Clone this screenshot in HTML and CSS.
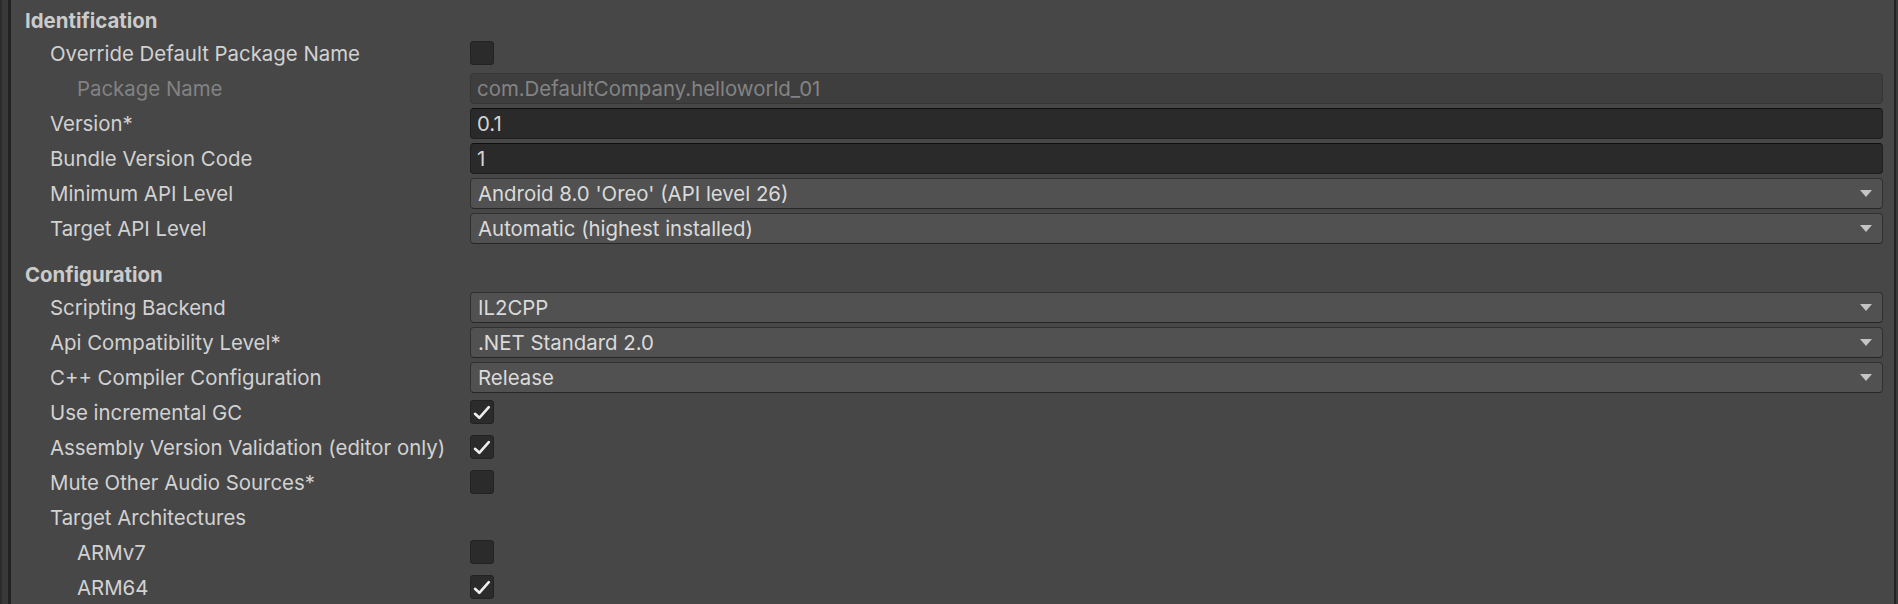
FILE: index.html
```html
<!DOCTYPE html>
<html>
<head>
<meta charset="utf-8">
<link rel="stylesheet" href="styles.css">
</head>
<body>
<div class="window">
  <div class="chrome-left"><span class="cl-a"></span><span class="cl-b"></span><span class="cl-c"></span></div>
  <div class="content">
    <section class="section first">
      <div class="header">Identification</div>
      <div class="row">
        <div class="label">Override Default Package Name</div>
        <div class="value"><span class="checkbox"></span></div>
      </div>
      <div class="row">
        <div class="label sub disabled">Package Name</div>
        <div class="value"><div class="field disabled-field">com.DefaultCompany.helloworld_01</div></div>
      </div>
      <div class="row">
        <div class="label">Version*</div>
        <div class="value"><div class="field text-field">0.1</div></div>
      </div>
      <div class="row">
        <div class="label">Bundle Version Code</div>
        <div class="value"><div class="field text-field">1</div></div>
      </div>
      <div class="row">
        <div class="label">Minimum API Level</div>
        <div class="value"><div class="field dropdown"><span>Android 8.0 'Oreo' (API level 26)</span><svg class="arrow" width="12" height="7" viewBox="0 0 12 7"><path d="M0 0H12L6 7Z"/></svg></div></div>
      </div>
      <div class="row">
        <div class="label">Target API Level</div>
        <div class="value"><div class="field dropdown"><span>Automatic (highest installed)</span><svg class="arrow" width="12" height="7" viewBox="0 0 12 7"><path d="M0 0H12L6 7Z"/></svg></div></div>
      </div>
    </section>
    <section class="section">
      <div class="header">Configuration</div>
      <div class="row">
        <div class="label">Scripting Backend</div>
        <div class="value"><div class="field dropdown"><span>IL2CPP</span><svg class="arrow" width="12" height="7" viewBox="0 0 12 7"><path d="M0 0H12L6 7Z"/></svg></div></div>
      </div>
      <div class="row">
        <div class="label">Api Compatibility Level*</div>
        <div class="value"><div class="field dropdown"><span>.NET Standard 2.0</span><svg class="arrow" width="12" height="7" viewBox="0 0 12 7"><path d="M0 0H12L6 7Z"/></svg></div></div>
      </div>
      <div class="row">
        <div class="label">C++ Compiler Configuration</div>
        <div class="value"><div class="field dropdown"><span>Release</span><svg class="arrow" width="12" height="7" viewBox="0 0 12 7"><path d="M0 0H12L6 7Z"/></svg></div></div>
      </div>
      <div class="row">
        <div class="label">Use incremental GC</div>
        <div class="value"><span class="checkbox"><svg width="24" height="24" viewBox="0 0 24 24"><path d="M5 13.8L9.3 17.8L18.8 7.2"/></svg></span></div>
      </div>
      <div class="row">
        <div class="label">Assembly Version Validation (editor only)</div>
        <div class="value"><span class="checkbox"><svg width="24" height="24" viewBox="0 0 24 24"><path d="M5 13.8L9.3 17.8L18.8 7.2"/></svg></span></div>
      </div>
      <div class="row">
        <div class="label">Mute Other Audio Sources*</div>
        <div class="value"><span class="checkbox"></span></div>
      </div>
      <div class="row">
        <div class="label">Target Architectures</div>
        <div class="value"></div>
      </div>
      <div class="row">
        <div class="label sub">ARMv7</div>
        <div class="value"><span class="checkbox"></span></div>
      </div>
      <div class="row">
        <div class="label sub">ARM64</div>
        <div class="value"><span class="checkbox"><svg width="24" height="24" viewBox="0 0 24 24"><path d="M5 13.8L9.3 17.8L18.8 7.2"/></svg></span></div>
      </div>
    </section>
  </div>
  <div class="chrome-right"><span class="cr-a"></span><span class="cr-b"></span></div>
</div>
</body>
</html>
```
FILE: styles.css
```css
html, body {
  margin: 0;
  padding: 0;
  background: #474747;
  height: 100%;
  overflow: hidden;
}
body {
  font-family: Inter, "Noto Sans", sans-serif;
  font-size: 20.4px;
  color: #d2d2d2;
}
.window {
  display: flex;
  height: 604px;
  width: 1898px;
}
.chrome-left, .chrome-right {
  display: flex;
  flex: none;
}
.chrome-left span, .chrome-right span { display: block; height: 100%; }
.cl-a { width: 2px; background: #2c2c2c; }
.cl-b { width: 6px; background: #393939; }
.cl-c { width: 3px; background: #222222; }
.cr-a { width: 2px; background: #232323; }
.cr-b { width: 2px; background: #3a3a3a; }
.content {
  flex: 1;
  padding: 6px 11px 0 0;
  background: #474747;
}
.section + .section { margin-top: 14px; }
.header {
  height: 30px;
  line-height: 30px;
  padding-left: 14px;
  font-weight: 700;
  color: #cbcbcb;
}
.row {
  height: 35px;
  display: flex;
  align-items: center;
}
.label {
  width: 420px;
  flex: none;
  padding-left: 39px;
  white-space: nowrap;
  color: #d2d2d2;
}
.label.sub { padding-left: 66px; width: 393px; }
.label.disabled { color: #828282; }
.value {
  flex: 1;
  display: flex;
  align-items: center;
  min-width: 0;
}
.checkbox {
  width: 22px;
  height: 22px;
  border: 1px solid #222222;
  border-radius: 3px;
  background: #2b2b2b;
  position: relative;
  margin-top: -2px;
}
.checkbox svg {
  position: absolute;
  left: -1px;
  top: -1px;
}
.checkbox path {
  fill: none;
  stroke: #eeeeee;
  stroke-width: 2.6;
  stroke-linecap: round;
  stroke-linejoin: round;
}
.field {
  flex: 1;
  height: 29px;
  box-sizing: content-box;
  border-radius: 4px;
  display: flex;
  align-items: center;
  padding: 0 6px;
  white-space: nowrap;
}
.text-field {
  background: #2a2a2a;
  border: 1px solid #1f1f1f;
  border-top-color: #0f0f0f;
  color: #d4d4d4;
}
.disabled-field {
  background: #3e3e3e;
  border: 1px solid #363636;
  color: #848484;
}
.dropdown {
  background: #515151;
  border: 1px solid #303030;
  border-bottom-color: #262626;
  color: #dadada;
  justify-content: space-between;
  padding-left: 7px;
  padding-right: 10px;
}
.arrow { flex: none; }
.arrow path { fill: #c4c4c4; }
```
